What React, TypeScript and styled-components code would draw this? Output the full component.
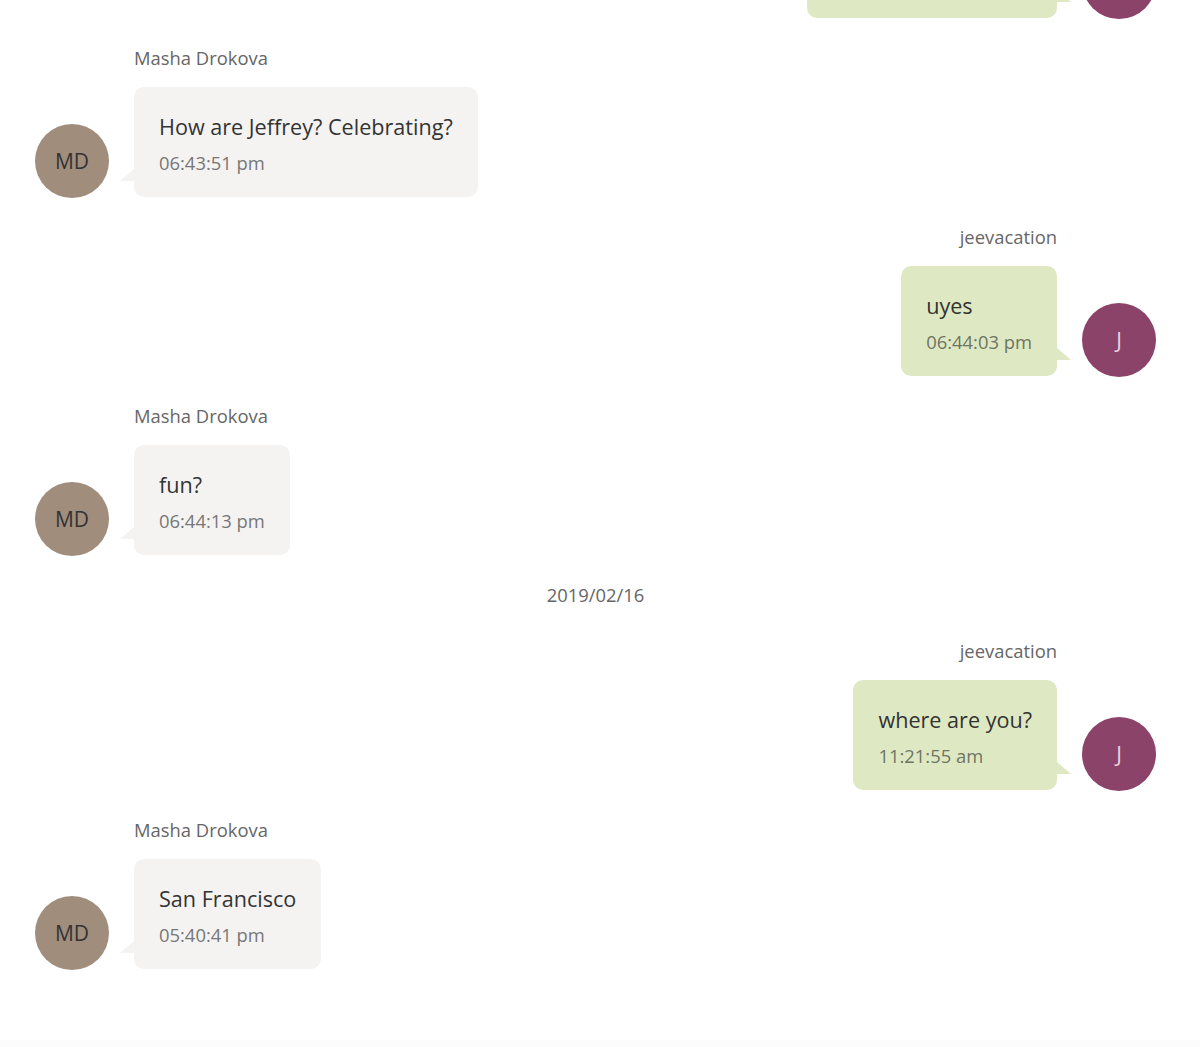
import React, { FC } from 'react';
import styled, { createGlobalStyle, css } from 'styled-components';

type Side = 'left' | 'right';

interface Message {
    kind: 'message';
    side: Side;
    author: string;
    initials: string;
    text: string;
    time: string;
}

interface DateMark {
    kind: 'date';
    date: string;
}

type Entry = Message | DateMark;

const entries: Entry[] = [
    { kind: 'message', side: 'right', author: 'jeevacation', initials: 'J', text: "Yes, it's my birthday", time: '06:43:20 pm' },
    { kind: 'message', side: 'left', author: 'Masha Drokova', initials: 'MD', text: 'How are Jeffrey? Celebrating?', time: '06:43:51 pm' },
    { kind: 'message', side: 'right', author: 'jeevacation', initials: 'J', text: 'uyes', time: '06:44:03 pm' },
    { kind: 'message', side: 'left', author: 'Masha Drokova', initials: 'MD', text: 'fun?', time: '06:44:13 pm' },
    { kind: 'date', date: '2019/02/16' },
    { kind: 'message', side: 'right', author: 'jeevacation', initials: 'J', text: 'where are you?', time: '11:21:55 am' },
    { kind: 'message', side: 'left', author: 'Masha Drokova', initials: 'MD', text: 'San Francisco', time: '05:40:41 pm' },
];

const App: FC = () => {
    return (
        <>
            <GlobalStyle />
            <Page>
                <Thread>
                    {entries.map((entry, i) =>
                        entry.kind === 'date' ? (
                            <DateLine key={i}>{entry.date}</DateLine>
                        ) : (
                            <MessageBlock key={i} $side={entry.side} $first={i === 0}>
                                <Column $side={entry.side}>
                                    <Author>{entry.author}</Author>
                                    <BubbleRow $side={entry.side}>
                                        <Bubble $side={entry.side}>
                                            <Text>{entry.text}</Text>
                                            <Time $side={entry.side}>{entry.time}</Time>
                                        </Bubble>
                                        <Avatar $side={entry.side}>{entry.initials}</Avatar>
                                    </BubbleRow>
                                </Column>
                            </MessageBlock>
                        )
                    )}
                </Thread>
                <Composer />
            </Page>
        </>
    );
};

export default App;

// Styled Components
const GlobalStyle = createGlobalStyle`
  html, body {
    margin: 0;
    padding: 0;
    background: #ffffff;
  }
  body {
    font-family: "Open Sans", "Noto Sans", sans-serif;
    color: #333;
  }
`;

const Page = styled.div`
  width: 1200px;
  height: 1047px;
  overflow: hidden;
  display: flex;
  flex-direction: column;
`;

const Thread = styled.div`
  flex: 1;
  padding: 0 44px 0 35px;
  display: flex;
  flex-direction: column;
  gap: 29px;
`;

/* the thread is scrolled: the first message sits partly above the view */
const MessageBlock = styled.div<{ $side: Side; $first: boolean }>`
  display: flex;
  justify-content: ${p => (p.$side === 'left' ? 'flex-start' : 'flex-end')};
  ${p => p.$first && css`
    margin-top: -132px;
  `}
`;

const Column = styled.div<{ $side: Side }>`
  display: flex;
  flex-direction: column;
  align-items: ${p => (p.$side === 'left' ? 'flex-start' : 'flex-end')};
  gap: 18px;
`;

const Author = styled.div`
  font-size: 18.4px;
  line-height: 22px;
  color: #666;
  padding-left: 99px;
  padding-right: 99px;
`;

const BubbleRow = styled.div<{ $side: Side }>`
  display: flex;
  flex-direction: ${p => (p.$side === 'left' ? 'row-reverse' : 'row')};
  align-items: flex-end;
  gap: 25px;
`;

const Bubble = styled.div<{ $side: Side }>`
  position: relative;
  box-sizing: border-box;
  height: 110px;
  padding: 25px 25px 0 25px;
  border-radius: 10px;
  background: ${p => (p.$side === 'left' ? '#f4f3f2' : '#dee9c3')};

  &::after {
    content: '';
    position: absolute;
    bottom: 16px;
    width: 0;
    height: 0;
    border-bottom: 12px solid ${p => (p.$side === 'left' ? '#f4f3f2' : '#dee9c3')};
    ${p => p.$side === 'left'
        ? css`
            left: -14px;
            border-left: 14px solid transparent;
          `
        : css`
            right: -14px;
            border-right: 14px solid transparent;
          `}
  }
`;

const Text = styled.div`
  font-size: 21.6px;
  line-height: 30px;
  color: #333;
  white-space: nowrap;
`;

const Time = styled.div<{ $side: Side }>`
  margin-top: 10px;
  font-size: 18.4px;
  line-height: 22px;
  color: ${p => (p.$side === 'left' ? '#777' : '#6f7563')};
  white-space: nowrap;
`;

const Avatar = styled.div<{ $side: Side }>`
  width: 74px;
  height: 74px;
  flex-shrink: 0;
  margin-bottom: -1px;
  border-radius: 50%;
  display: flex;
  align-items: center;
  justify-content: center;
  font-size: 21px;
  background: ${p => (p.$side === 'left' ? '#a08d7c' : '#8c4369')};
  color: ${p => (p.$side === 'left' ? '#333' : '#ecd3df')};
`;

const DateLine = styled.div`
  text-align: center;
  font-size: 18.4px;
  line-height: 22px;
  color: #666;
  margin-bottom: 5px;
`;

const Composer = styled.div`
  height: 7px;
  flex-shrink: 0;
  background: #fcfcfc;
`;
